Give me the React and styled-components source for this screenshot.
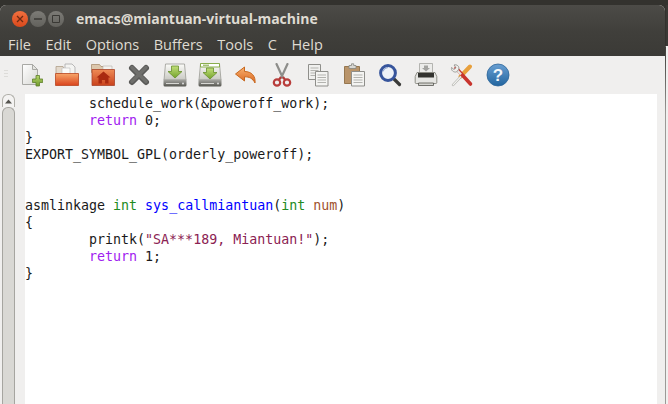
import React from 'react'
import styled, { createGlobalStyle } from 'styled-components'

const Global = createGlobalStyle`
  html, body { margin: 0; padding: 0; background: #3a3935; }
  body { width: 668px; height: 404px; overflow: hidden; }
`

const NewIcon = () => (
  <svg width="24" height="24" viewBox="0 0 24 24">
    <defs>
      <linearGradient id="pg" x1="0" y1="0" x2="1" y2="1"><stop offset="0" stopColor="#fff" /><stop offset="1" stopColor="#d8d8d4" /></linearGradient>
      <linearGradient id="pl" x1="0" y1="0" x2="0" y2="1"><stop offset="0" stopColor="#b5d56a" /><stop offset="1" stopColor="#6f9a2c" /></linearGradient>
    </defs>
    <path d="M3.5 1.5h10l5 5v15h-15z" fill="url(#pg)" stroke="#a9a9a5" />
    <path d="M13.5 1.5v5h5z" fill="#e4e4e0" stroke="#a9a9a5" />
    <path d="M17 12.5h3.5v3.5h3.2v3.5h-3.2V23H17v-3.5h-3.5V16H17z" fill="url(#pl)" stroke="#5d7f2a" strokeWidth=".8" />
  </svg>
)

const OpenIcon = () => (
  <svg width="24" height="24" viewBox="0 0 24 24">
    <defs>
      <linearGradient id="fo" x1="0" y1="0" x2="0" y2="1"><stop offset="0" stopColor="#f7a66a" /><stop offset="1" stopColor="#d9431c" /></linearGradient>
    </defs>
    <path d="M1 3.5h7l1 2h5v5H1z" fill="#e3d9cc" stroke="#b09f8a" strokeWidth=".8" />
    <path d="M10 1h7l3 3v8H10z" fill="#f4f4f2" stroke="#aaa" strokeWidth=".8" />
    <path d="M7 5h8v7H7z" fill="#fbfbfa" stroke="#bbb" strokeWidth=".6" />
    <path d="M.5 10.5h23v12H.5z" fill="url(#fo)" stroke="#b9451f" strokeWidth=".8" />
  </svg>
)

const HomeIcon = () => (
  <svg width="24" height="24" viewBox="0 0 24 24">
    <defs>
      <linearGradient id="fh" x1="0" y1="0" x2="0" y2="1"><stop offset="0" stopColor="#ef8b55" /><stop offset="1" stopColor="#c9421c" /></linearGradient>
    </defs>
    <path d="M.5 1.5h8l1.5 2h10v6H.5z" fill="#dcc7ac" stroke="#a98e70" strokeWidth=".8" />
    <path d="M12 3h9v6h-9z" fill="#f3f1ee" stroke="#b5b0a8" strokeWidth=".6" />
    <path d="M1 6.5h22.5v16H1z" fill="url(#fh)" stroke="#a8442a" strokeWidth=".8" />
    <path d="M12.5 8.5l7 6h-2v6h-3.4v-3.6h-3.2v3.6H7.500v-6h-2z" fill="#a92a10" />
  </svg>
)

const CloseIcon = () => (
  <svg width="24" height="24" viewBox="0 0 24 24">
    <path d="M5 5l14 14M19 5L5 19" stroke="#5a5a58" strokeWidth="6" strokeLinecap="round" />
    <path d="M5 4.500l14 14M19 4.500L5 18.500" stroke="#6f6f6c" strokeWidth="3.500" strokeLinecap="round" />
  </svg>
)

const Disk = ({ id, label }) => (
  <svg width="24" height="24" viewBox="0 0 24 24">
    <defs>
      <linearGradient id={id + 'b'} x1="0" y1="0" x2="0" y2="1"><stop offset="0" stopColor="#fbfbf8" /><stop offset="1" stopColor="#c9c9c3" /></linearGradient>
      <linearGradient id={id + 'f'} x1="0" y1="0" x2="0" y2="1"><stop offset="0" stopColor="#a9a9a5" /><stop offset="1" stopColor="#55554f" /></linearGradient>
      <linearGradient id={id + 'g'} x1="0" y1="0" x2="0" y2="1"><stop offset="0" stopColor="#c2df7a" /><stop offset="1" stopColor="#74a32c" /></linearGradient>
    </defs>
    <path d="M2.500 1h19l1.500 16H1z" fill={`url(#${id}b)`} stroke="#9a9a94" strokeWidth=".8" />
    <path d="M.5 16.500h23v5.500q0 1.500-1.500 1.500H2q-1.500 0-1.500-1.500z" fill={`url(#${id}f)`} />
    <path d="M3 20.500h13" stroke="#d8d8d4" strokeWidth="1" />
    <circle cx="20" cy="20.500" r="1" fill="#ddd" />
    {label && <path d="M2.500 .5h19v3.500h-19z" fill="#fff" stroke="#7fa63b" strokeWidth=".9" />}
    {label && <path d="M5 2.200h6" stroke="#7fa63b" strokeWidth="1" />}
    <path d={label ? 'M8.500 5h7v4.500h3.500L12 16 5 9.500h3.500z' : 'M8.500 3h7v5.500h3.500L12 15 5 8.500h3.500z'} fill={`url(#${id}g)`} stroke="#688f2c" strokeWidth=".8" />
  </svg>
)

const UndoIcon = () => (
  <svg width="24" height="24" viewBox="0 0 24 24">
    <defs>
      <linearGradient id="un" x1="0" y1="0" x2="0" y2="1"><stop offset="0" stopColor="#f9b271" /><stop offset="1" stopColor="#d9661f" /></linearGradient>
    </defs>
    <path d="M10.500 4L1.500 11l9 7v-4.200c5 0 8 1.500 10.500 6.200.8-7-3.500-11.500-10.500-11.500z" fill="url(#un)" stroke="#c7681f" strokeWidth="1" strokeLinejoin="round" />
  </svg>
)

const CutIcon = () => (
  <svg width="24" height="24" viewBox="0 0 24 24">
    <path d="M6.500 1l6.200 13.500M17.500 1l-6.200 13.500" stroke="#8e8e8b" strokeWidth="2.200" strokeLinecap="round" />
    <path d="M11 14l-2.300 3.200M13 14l2.300 3.200" stroke="#b33a38" strokeWidth="2.200" />
    <circle cx="7" cy="19.500" r="3.200" fill="none" stroke="#b83d3b" strokeWidth="2.200" />
    <circle cx="17" cy="19.500" r="3.200" fill="none" stroke="#b83d3b" strokeWidth="2.200" />
  </svg>
)

const lines = (x, ys, w) => ys.map(y => <path key={y} d={`M${x} ${y}h${w}`} stroke="#b3b3af" strokeWidth="1" />)

const CopyIcon = () => (
  <svg width="24" height="24" viewBox="0 0 24 24">
    <path d="M2.500 1.500h12v15h-12z" fill="#f0f0ee" stroke="#8f8f8b" />
    {lines(4.500, [5, 7.500, 10, 12.500], 8)}
    <path d="M9.500 8.500h12.500v14.500H9.500z" fill="#f4f4f2" stroke="#8f8f8b" />
    {lines(11.500, [12, 14.500, 17, 19.500], 8.500)}
  </svg>
)

const PasteIcon = () => (
  <svg width="24" height="24" viewBox="0 0 24 24">
    <path d="M2.500 3.500h15v17h-15z" fill="#b9946a" stroke="#96774f" />
    <path d="M7 2.500h2.500V.8h2.200v1.700H14v3H7z" fill="#d8d8d4" stroke="#85857f" strokeWidth=".8" />
    <path d="M9.500 8.500h13v14.500h-13z" fill="#f4f4f2" stroke="#8f8f8b" />
    {lines(11.500, [12, 14.500, 17, 19.500], 9)}
  </svg>
)

const SearchIcon = () => (
  <svg width="24" height="24" viewBox="0 0 24 24">
    <path d="M15.500 15.500l6 6" stroke="#3a3a38" strokeWidth="3.200" strokeLinecap="round" />
    <circle cx="10" cy="10" r="7.400" fill="#eef2f7" stroke="#37559c" strokeWidth="3" />
    <path d="M5 8.500a5.500 5.500 0 0 1 5-4" stroke="#8fa5d0" strokeWidth="1" fill="none" />
  </svg>
)

const PrintIcon = () => (
  <svg width="24" height="24" viewBox="0 0 24 24">
    <path d="M5.500 .5h13v9h-13z" fill="#ececea" stroke="#a5a5a1" strokeWidth=".8" />
    <path d="M10 2.500h4v2.500h2L12 8.500 8 5h2z" fill="#a3a3a0" />
    <path d="M3 9.500h18l1.800 4v6q0 1-1 1H2.200q-1 0-1-1v-6z" fill="#e6e6e3" stroke="#77776f" strokeWidth=".8" />
    <path d="M4 10h16v4.500H4z" fill="#33332f" />
    <path d="M4.500 20h15v2.500h-15z" fill="#d5d5d1" stroke="#55554f" strokeWidth=".8" />
  </svg>
)

const ToolsIcon = () => (
  <svg width="24" height="24" viewBox="0 0 24 24">
    <path d="M21 2L12 13" stroke="#b56d1e" strokeWidth="1" />
    <path d="M20 3.500l-9.500 10" stroke="#e8a03c" strokeWidth="4" strokeLinecap="round" />
    <path d="M11 13.500L3 22" stroke="#a8a8a4" strokeWidth="2.400" strokeLinecap="round" />
    <path d="M11 13.500L3 22" stroke="#f2f2ef" strokeWidth="1.200" strokeLinecap="round" />
    <path d="M6 5l14.500 16" stroke="#c8352e" strokeWidth="3.600" strokeLinecap="round" />
    <path d="M6 6l5 5.500" stroke="#e4e4e0" strokeWidth="2.400" />
    <path d="M1.500 4.500l2.500 2 2-1.800-2-2.700c2.800-.8 5.500 1 4.800 4.200L6.500 9C3.500 9.500 1 7.500 1.500 4.500z" fill="#efefec" stroke="#8c8c88" strokeWidth=".8" />
  </svg>
)

const HelpIcon = () => (
  <svg width="24" height="24" viewBox="0 0 24 24">
    <defs>
      <linearGradient id="hp" x1="0" y1="0" x2="0" y2="1"><stop offset="0" stopColor="#6a9fd2" /><stop offset="1" stopColor="#22659f" /></linearGradient>
    </defs>
    <circle cx="12" cy="12" r="11" fill="url(#hp)" stroke="#2d6699" strokeWidth=".8" />
    <text x="12" y="18" textAnchor="middle" fontFamily="'Liberation Sans', sans-serif" fontSize="17" fontWeight="700" fill="#f4f7fa">?</text>
  </svg>
)

const tools = [
  <NewIcon />, <OpenIcon />, <HomeIcon />, <CloseIcon />,
  <Disk id="sv" />, <Disk id="sa" label />, <UndoIcon />, <CutIcon />,
  <CopyIcon />, <PasteIcon />, <SearchIcon />, <PrintIcon />, <ToolsIcon />, <HelpIcon />,
]

const menus = ['File', 'Edit', 'Options', 'Buffers', 'Tools', 'C', 'Help']

const App = () => (
  <>
    <Global />
    <Page>
      <Win>
        <TitleBar>
          <WinButtons>
            <WinButton $kind="close"><svg width="8" height="8" viewBox="0 0 8 8"><path d="M1 1l6 6M7 1L1 7" stroke="#6e2a12" strokeWidth="1.300" /></svg></WinButton>
            <WinButton><svg width="8" height="8" viewBox="0 0 8 8"><path d="M0 4h8" stroke="#3a3935" strokeWidth="1.300" /></svg></WinButton>
            <WinButton><svg width="8" height="8" viewBox="0 0 8 8"><path d="M.5 .5h7v7h-7z" fill="none" stroke="#3a3935" /></svg></WinButton>
          </WinButtons>
          <Title>emacs@miantuan-virtual-machine</Title>
        </TitleBar>
        <MenuBar>
          {menus.map(m => <MenuItem key={m}>{m}</MenuItem>)}
        </MenuBar>
        <ToolBar>
          <Grip />
          {tools.map((t, i) => <ToolButton key={i}>{t}</ToolButton>)}
        </ToolBar>
        <Main>
          <ScrollBar>
            <ScrollUp><svg width="7" height="5" viewBox="0 0 7 5"><path d="M3.500 .5L7 4.500H0z" fill="#55544f" /></svg></ScrollUp>
            <ScrollThumb />
          </ScrollBar>
          <Editor>
            <Line>{'        schedule_work(&poweroff_work);'}</Line>
            <Line>{'        '}<Kw>return</Kw>{' 0;'}</Line>
            <Line>{'}'}</Line>
            <Line>EXPORT_SYMBOL_GPL(orderly_poweroff);</Line>
            <Line />
            <Line />
            <Line>asmlinkage <Type>int</Type> <Fn>sys_callmiantuan</Fn>(<Type>int</Type> <Var>num</Var>)</Line>
            <Line>{'{'}</Line>
            <Line>{'        printk('}<Str>"SA***189, Miantuan!"</Str>{');'}</Line>
            <Line>{'        '}<Kw>return</Kw>{' 1;'}</Line>
            <Line>{'}'}</Line>
          </Editor>
        </Main>
      </Win>
      <Gutter />
    </Page>
  </>
)

export default App

const Page = styled.div`
  display: flex;
  width: 668px;
  height: 404px;
  padding-top: 5px;
  box-sizing: border-box;
  background: #33322e;
`

const Win = styled.div`
  flex: 0 0 665px;
  display: flex;
  flex-direction: column;
  border-radius: 6px 6px 0 0;
  overflow: hidden;
  background: #f0efee;
`

const Gutter = styled.div`
  flex: 1;
  background:
    linear-gradient(#33322e 41px, #807f7b 41px, #3d3c38 42px, #9b9a97 110px) left top / 1px 100% no-repeat,
    linear-gradient(#3a3935 41px, #f1f0ef 41px);
`

const TitleBar = styled.div`
  height: 27px;
  display: flex;
  align-items: center;
  background: linear-gradient(#4c4b47, #403f3b);
`

const WinButtons = styled.div`
  display: flex;
  gap: 2px;
  margin-left: 12px;
`

const WinButton = styled.div`
  width: 16px;
  height: 16px;
  border-radius: 50%;
  display: flex;
  align-items: center;
  justify-content: center;
  background: ${p => (p.$kind === 'close' ? 'linear-gradient(#f2703f, #d9491c)' : 'linear-gradient(#7d7c77, #62615c)')};
`

const Title = styled.div`
  margin-left: 12px;
  color: #dfdbd2;
  font: 700 14px "Open Sans", sans-serif;
  white-space: nowrap;
`

const MenuBar = styled.div`
  height: 24px;
  display: flex;
  align-items: center;
  gap: 14.500px;
  padding-left: 8px;
  background: linear-gradient(#403f3b, #3b3a36);
`

const MenuItem = styled.span`
  color: #dfdbd2;
  font: 400 14.500px "Open Sans", sans-serif;
`

const ToolBar = styled.div`
  height: 38px;
  flex: none;
  display: flex;
  align-items: center;
  position: relative;
  padding-left: 13px;
  box-sizing: border-box;
  background: #f0efee;
`

const Grip = styled.div`
  position: absolute;
  left: 4px;
  top: 14px;
  width: 4px;
  height: 9px;
  background: repeating-linear-gradient(#dddcd9 0 1px, transparent 1px 3px);
`

const ToolButton = styled.div`
  flex: 0 0 35.920px;
  display: flex;
  justify-content: center;
  height: 24px;
  margin-top: -1px;
`

const Main = styled.div`
  flex: 1;
  display: flex;
  min-height: 0;
`

const ScrollBar = styled.div`
  flex: 0 0 13px;
  margin-left: 2px;
  display: flex;
  flex-direction: column;
  box-sizing: border-box;
`

const ScrollUp = styled.div`
  height: 13px;
  display: flex;
  align-items: center;
  justify-content: center;
  background: #f4f3f2;
  border: 1px solid #b0afa9;
  border-bottom: 0;
  border-radius: 6px 6px 0 0;
  box-sizing: border-box;
`

const ScrollThumb = styled.div`
  flex: 1;
  background: #d9d8d4;
  border: 1px solid #a6a5a0;
  border-bottom: 0;
  border-radius: 6px 6px 0 0;
`

const Editor = styled.div`
  flex: 1;
  margin: 0 8px 0 10px;
  padding-top: 1px;
  background: #fff;
  color: #1a1a1a;
  font: 400 13.300px/17px "DejaVu Sans Mono", monospace;
  white-space: pre;
  overflow: hidden;
`

const Line = styled.div`
  height: 17px;
`

const Kw = styled.span`
  color: #a020f0;
`

const Type = styled.span`
  color: #228b22;
`

const Fn = styled.span`
  color: #0000ff;
`

const Var = styled.span`
  color: #a0522d;
`

const Str = styled.span`
  color: #8b2252;
`
